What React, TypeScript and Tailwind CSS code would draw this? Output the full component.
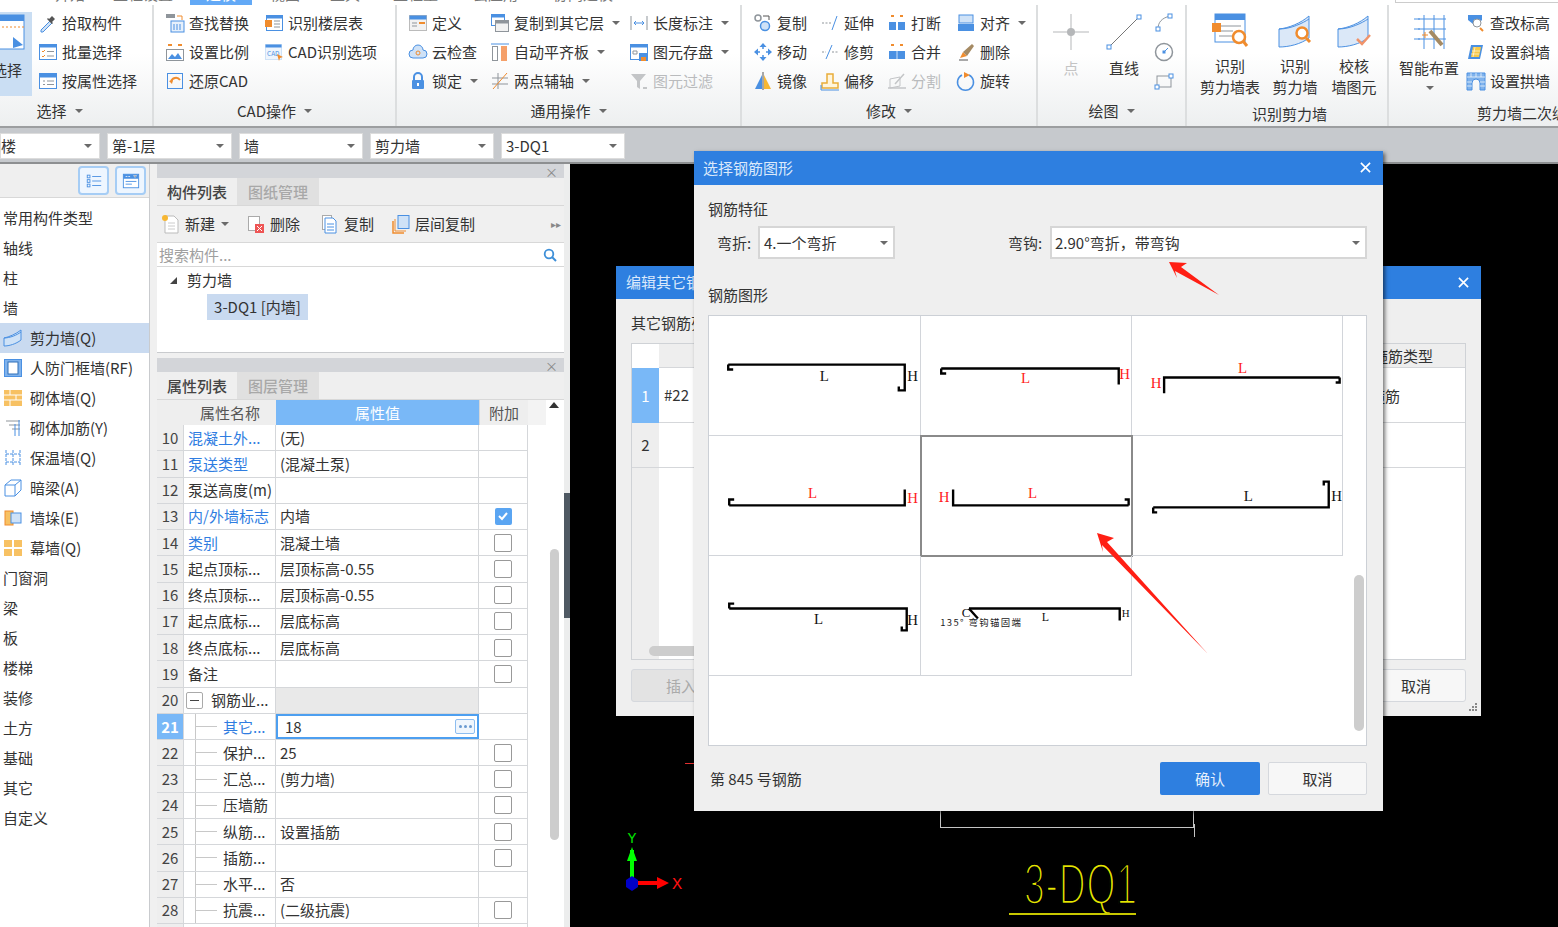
import type { ReactNode } from 'react'

const B = '#4a90e2'
const O = '#f08c2e'
const G = '#8f959b'
const P = '#cfe2f7'

const icons: Record<string, ReactNode> = {
  pick: <><path d="M3 17l9-9 2 2-9 9H3z" fill={P} stroke={B} /><path d="M11 6l3-3 3 3-3 3 1 1-1 1-5-5 1-1z" fill="#555" /></>,
  batch: <><rect x="1.5" y="2.5" width="17" height="15" fill="#fff" stroke={B} /><rect x="1.5" y="2.5" width="17" height="3" fill={B} /><path d="M4 9l1 1 2-2M4 14l1 1 2-2" stroke={O} fill="none" /><path d="M9 9.5h7M9 14h7" stroke={G} /></>,
  attr: <><rect x="1.5" y="2.5" width="17" height="15" fill="#fff" stroke={B} /><rect x="1.5" y="2.5" width="17" height="4" fill={B} /><path d="M5 10h2M9 10h7M5 13.5h2M9 13.5h7" stroke={G} /></>,
  listv: <><rect x="2.5" y="3.5" width="3" height="3" fill="none" stroke={B} /><rect x="2.5" y="8.5" width="3" height="3" fill="none" stroke={B} /><rect x="2.5" y="13.5" width="3" height="3" fill="none" stroke={B} /><path d="M8 5h10M8 10h10M8 15h10" stroke={B} /></>,
  formv: <><rect x="1.5" y="2.5" width="17" height="15" fill="#fff" stroke={B} /><rect x="1.5" y="2.5" width="17" height="5" fill={B} /><path d="M4 5h2M7 5h2M13 4h3l-1.5 2z" stroke="#fff" strokeWidth=".8" /><path d="M4 10.5h12M4 13.5h7" stroke={B} /></>,
  find: <><rect x="1" y="1" width="9" height="4" fill={G} /><path d="M12 3h5v4" stroke={O} fill="none" /><rect x="6" y="8" width="13" height="11" fill="#e6f0fb" stroke={B} /><path d="M9 11v6M12 11v6M15 11v6" stroke={B} /></>,
  scale: <><path d="M3 3h4M13 3h4" stroke={O} strokeWidth="2" /><rect x="1.5" y="7.5" width="17" height="11" fill="#fff" stroke={G} /><path d="M3 17l4-5 3 3 3-4 4 6z" fill={B} /></>,
  restore: <><rect x="2.5" y="2.5" width="15" height="15" fill="none" stroke={B} /><path d="M6 11a5 5 0 0 1 9-2" stroke={O} strokeWidth="2" fill="none" /><path d="M4 10l3 3 1-4z" fill={O} /></>,
  floor: <><rect x="2.5" y="2.5" width="16" height="15" fill="#fff" stroke={B} /><rect x="2.5" y="2.5" width="16" height="3" fill={B} /><rect x="1" y="7" width="7" height="7" fill={O} /><path d="M10 8h6M10 11h6M10 14h6" stroke={G} /></>,
  cadopt: <><rect x="1.5" y="2.5" width="16" height="15" fill="#eef5fd" stroke={P} /><rect x="1.5" y="2.5" width="16" height="3" fill={B} /><text x="3" y="14" fontSize="6.5" fill={B}>CAD</text><path d="M13 12l6 3-3 1-1 3z" fill={O} /></>,
  define: <><rect x="1.5" y="2.5" width="17" height="15" fill="#f2f2f2" stroke="#bbb" /><rect x="1.5" y="2.5" width="17" height="4" fill={B} /><path d="M4 10h5M4 13h5" stroke={G} /><path d="M11 9h6v2h-6z" fill={O} /></>,
  cloud: <><path d="M5 16a4 4 0 0 1 0-8 5 5 0 0 1 10 0 4 4 0 0 1 0 8z" fill={P} stroke={B} /><circle cx="10" cy="11" r="2" fill="none" stroke={O} /></>,
  lock: <><path d="M6 9V6a4 4 0 0 1 8 0v3" fill="none" stroke={B} strokeWidth="2" /><rect x="4" y="9" width="12" height="9" rx="1" fill={B} /><rect x="9" y="12" width="2" height="3" fill="#fff" /></>,
  copylayer: <><rect x="1.5" y="1.5" width="13" height="11" fill="#fff" stroke={B} /><rect x="1.5" y="1.5" width="13" height="3" fill={B} /><rect x="5.5" y="7.5" width="13" height="11" fill="#f2f2f2" stroke={G} /><rect x="5.5" y="7.5" width="13" height="3" fill={G} /></>,
  alignboard: <><rect x="2.5" y="4.5" width="5" height="14" fill="#fff" stroke={G} /><rect x="11" y="4" width="6" height="15" fill="#f5a06a" /><path d="M1 2h18" stroke={B} /></>,
  axis: <><path d="M2 7h16M2 13h16M8 2v16" stroke={G} /><path d="M3 18L17 2" stroke={O} /></>,
  measure: <><path d="M2 3v14M18 3v14" stroke={G} /><path d="M5 10h10M5 10l2-2M5 10l2 2M15 10l-2-2M15 10l-2 2" stroke={B} fill="none" /></>,
  save: <><rect x="1.5" y="2.5" width="17" height="15" fill="#fff" stroke={B} /><rect x="1.5" y="2.5" width="17" height="3" fill={B} /><path d="M4 9h4v3H4z" fill="none" stroke={G} /><rect x="10" y="11" width="9" height="8" fill={B} /><rect x="12" y="15" width="5" height="4" fill={O} /></>,
  filter: <path d="M2 3h15l-6 7v8l-3-2v-6zM14 16h4v2h-4z" fill="#c3c5c7" />,
  copy: <><circle cx="5" cy="5" r="3" fill="none" stroke={G} strokeWidth="1.5" /><circle cx="12" cy="13" r="4.5" fill={P} stroke={B} strokeWidth="1.5" /><path d="M10 3h6v4" fill="none" stroke="#555" /></>,
  extend: <><path d="M2 10h9" stroke={G} strokeDasharray="2 1.5" /><path d="M12 17l5-14" stroke={B} /></>,
  break: <><path d="M4 3h3M13 3h3" stroke={O} strokeWidth="2" /><rect x="2" y="9" width="7" height="8" fill={B} /><rect x="11" y="9" width="7" height="8" fill={B} /></>,
  alignr: <><rect x="3" y="2" width="14" height="8" fill={P} stroke={B} /><rect x="2" y="11" width="16" height="7" fill={B} /></>,
  move: <><path d="M10 1l3.5 4h-7zM10 19l3.5-4h-7zM1 10l4-3.5v7zM19 10l-4-3.5v7z" fill={B} /><path d="M10 5v2M10 13v2M5 10h2M13 10h2" stroke={B} strokeWidth="1.5" /></>,
  trim: <><path d="M2 10h4M12 10h6" stroke={G} strokeDasharray="2 1.5" /><path d="M6 17l6-14" stroke={B} /></>,
  merge: <><path d="M4 3h3M13 3h3" stroke={O} strokeWidth="2" /><rect x="2" y="9" width="16" height="8" fill={B} /><path d="M10 9v8" stroke={P} /></>,
  del: <><path d="M3 18h9" stroke="#555" /><path d="M4 16l3-6 4 4z" fill={O} /><path d="M7 10l9-8 2 2-7 10z" fill="#a58a63" /></>,
  mirror: <><path d="M9 4v14H2z" fill={B} /><path d="M11 4v14h7z" fill="#f7b733" /><path d="M10 1v18" stroke="#555" /></>,
  offset: <><path d="M2 17v-5h5V3h6v9h5v5z" fill="#fff5dc" stroke="#e9ad3a" strokeWidth="1.5" /><path d="M1 14v5h18" fill="none" stroke={B} /></>,
  split: <><path d="M3 17V8l10-2v9z" fill="none" stroke="#c3c5c7" /><path d="M1 17h18M8 13l9-10" stroke="#c3c5c7" strokeWidth="1.5" /></>,
  rotate: <><path d="M6 4a8 8 0 1 0 7 0" fill="none" stroke={B} strokeWidth="1.5" /><path d="M8 1l6 3-6 3z" fill={O} /></>,
  arc: <><path d="M4 16C4 9 8 5 16 3" fill="none" stroke={G} /><rect x="2" y="14" width="4" height="4" fill="#fff" stroke={B} /><rect x="14" y="1" width="4" height="4" fill="#fff" stroke={B} /></>,
  circle: <><circle cx="10" cy="10" r="8.5" fill="none" stroke={G} strokeWidth="1.5" /><rect x="8.5" y="8.5" width="3" height="3" fill={B} /><path d="M10 10l4-4" stroke={B} /></>,
  rectd: <><rect x="3" y="5" width="14" height="11" fill="none" stroke={G} /><rect x="1" y="14" width="4" height="4" fill="#fff" stroke={B} /><rect x="15" y="3" width="4" height="4" fill="#fff" stroke={B} /></>,
  elev: <><path d="M2 2h14v5l-4 4H7L2 7z" fill={B} /><circle cx="11" cy="10" r="4" fill="#fff" stroke={G} /><path d="M14 15l3 3" stroke={O} strokeWidth="2" /></>,
  slant: <><path d="M5 3h12l-3 14H2z" fill={B} /><path d="M7 5h8l-2 10H5z" fill="#f7c948" /><path d="M6 9h8M5 12h8M9 5l-2 10" stroke="#fff" strokeWidth=".6" /></>,
  arch: <><path d="M1 2h18v17h-5v-7a4 4 0 0 0-8 0v7H1z" fill="#7fb2ec" stroke={B} /><path d="M1 6h18M5 2v4M10 2v4M15 2v4M1 11h5M14 11h5M1 15h5M14 15h5" stroke="#fff" strokeWidth=".7" /></>,
  newdoc: <><path d="M4 2h9l4 4v13H4z" fill="#fff" stroke="#bbb" /><path d="M7 9h7M7 12h7M7 15h7" stroke="#ccc" /><circle cx="4" cy="4" r="3" fill="#f7b733" /></>,
  deldoc: <><rect x="2.5" y="2.5" width="11" height="14" fill="#fff" stroke="#aaa" /><rect x="9" y="10" width="9" height="9" fill="#e55" /><path d="M11 12l5 5M16 12l-5 5" stroke="#fff" /></>,
  copydoc: <><rect x="2.5" y="1.5" width="9" height="14" fill="#fff" stroke="#aaa" /><path d="M5 4h8l3 3v12H5z" fill="#fff" stroke={B} /><path d="M7 10h7M7 13h7M7 16h7" stroke={B} /></>,
  floorcopy: <><path d="M2 7v12h11" fill="none" stroke={O} strokeWidth="1.5" /><path d="M4 5v12h11" fill="none" stroke={O} /><rect x="7" y="1.5" width="11" height="13" fill={P} stroke={B} /></>,
  shear: <><path d="M1 10C6 9 13 6 18 2v10c-5 4-12 6-17 6z" fill={P} stroke={B} /><path d="M1 10c6 0 13-3 17-6" fill="none" stroke={B} /></>,
  door: <><rect x="1.5" y="1.5" width="17" height="17" fill="#7fb2ec" stroke={B} /><rect x="5" y="4" width="10" height="12" fill="#fff" stroke="#2f6fb7" /></>,
  brick: <><rect x="1" y="2" width="18" height="16" fill="#f7c163" /><path d="M1 7h18M1 12h18M7 2v5M13 7v5M7 12v6" stroke="#fff" /></>,
  rebarw: <><path d="M3 3h14M6 7h11M9 11h8" stroke={G} /><path d="M16 2v16M12 6v12" stroke={B} /></>,
  insulate: <><path d="M3 2v16M10 2v16M17 2v16M3 6h14M3 14h14" stroke={B} strokeDasharray="3 1" /></>,
  hiddenbeam: <><path d="M2 7l6-5h10v10l-6 6H2z" fill="#fff" stroke={B} /><path d="M2 7h10v11M12 7l6-5" fill="none" stroke={B} /></>,
  pier: <><rect x="2" y="3" width="8" height="14" fill="#f7c163" stroke={O} /><rect x="8" y="5" width="10" height="10" fill={P} stroke={B} /></>,
  curtain: <><rect x="1" y="2" width="18" height="16" fill="#f7c163" /><path d="M10 2v16M1 10h18" stroke="#fff" strokeWidth="2" /></>,
}

function Ico({ name, size = 20 }: { name: string; size?: number }) {
  return (
    <svg viewBox="0 0 20 20" width={size} height={size} className="shrink-0">
      {icons[name]}
    </svg>
  )
}

function Caret({ color = 'border-t-[#6a6a6a]' }: { color?: string }) {
  return <span className={`inline-block w-0 h-0 border-x-[4px] border-x-transparent border-t-[4px] ${color}`} />
}

function Tool({ icon, label, caret, off, w }: { icon: string; label: string; caret?: boolean; off?: boolean; w: string }) {
  return (
    <div className={`flex items-center h-[29px] shrink-0 ${w}`}>
      <Ico name={icon} />
      <span className={`ml-[4px] whitespace-nowrap ${off ? 'text-[#b9bbbd]' : ''}`}>{label}</span>
      {caret && <span className="ml-[8px] flex"><Caret /></span>}
    </div>
  )
}

function Group({ w, label, caret, labelPad, children, pl }: { w: string; label: string; caret?: boolean; labelPad: string; children: ReactNode; pl: string }) {
  return (
    <div className={`relative flex flex-col shrink-0 border-r-2 border-r-[#dcdedf] ${w}`}>
      <div className={`flex h-[90px] pt-[3px] ${pl}`}>{children}</div>
      <div className={`flex items-center justify-center gap-[8px] ${labelPad}`}>
        <span>{label}</span>
        {caret && <Caret />}
      </div>
    </div>
  )
}

function Col({ children }: { children: ReactNode }) {
  return <div className="flex flex-col">{children}</div>
}

function BigBtn({ w, icon, lines, off }: { w: string; icon: ReactNode; lines: string[]; off?: boolean }) {
  return (
    <div className={`flex flex-col items-center shrink-0 ${w}`}>
      <div className="h-[38px] mt-[5px] flex items-center">{icon}</div>
      <div className={`mt-[6px] leading-[21px] text-center whitespace-nowrap ${off ? 'text-[#c4c4c4]' : ''}`}>
        {lines.map(l => <div key={l}>{l}</div>)}
      </div>
    </div>
  )
}

function WallArt({ kind }: { kind: 'find' | 'check' }) {
  return (
    <svg viewBox="0 0 36 36" width="36" height="36">
      <path d="M2 16c10-1 22-6 30-13v22c-8 6-20 9-30 9z" fill="#dbe8f8" stroke={B} />
      <path d="M2 16c12 0 24-6 30-10" fill="none" stroke={B} />
      {kind === 'find' ? (
        <><circle cx="25" cy="20" r="5.5" fill="#fff" stroke={O} strokeWidth="2.5" /><path d="M29 25l4 4" stroke={O} strokeWidth="3" /></>
      ) : (
        <path d="M21 26l5 5 8-9" fill="none" stroke="#f0936a" strokeWidth="2.5" />
      )}
    </svg>
  )
}

function Ribbon() {
  return (
    <div className="flex h-[123px] bg-gradient-to-b from-white from-40% to-[#edeff0] border-b-2 border-b-[#9c9ea0] text-[15px] leading-[22px] text-[#333]">
      <Group w="w-[154px]" label="选择" caret labelPad="pt-[5px] pr-[33px]" pl="">
        <div className="w-[32px] h-[84px] mt-[4px] bg-[#cadef3] overflow-hidden shrink-0 flex flex-col">
          <svg viewBox="0 0 32 38" width="32" height="38" className="mt-[1px]">
            <rect x="-10" y="2" width="34" height="34" fill="#fff" stroke={B} />
            <rect x="-10" y="2" width="34" height="6" fill={B} />
            <path d="M-10 14h34" stroke={O} strokeDasharray="2 2" />
            <path d="M13 24l10 8-10 3z" fill={B} />
          </svg>
          <span className="-ml-[8px] mt-[8px] whitespace-nowrap">选择</span>
        </div>
        <div className="ml-[6px]">
          <Col>
            <Tool w="" icon="pick" label="拾取构件" />
            <Tool w="" icon="batch" label="批量选择" />
            <Tool w="" icon="attr" label="按属性选择" />
          </Col>
        </div>
      </Group>
      <Group w="w-[243px]" label="CAD操作" caret labelPad="pt-[5px]" pl="pl-[11px]">
        <Col>
          <Tool w="w-[99px]" icon="find" label="查找替换" />
          <Tool w="w-[99px]" icon="scale" label="设置比例" />
          <Tool w="w-[99px]" icon="restore" label="还原CAD" />
        </Col>
        <Col>
          <Tool w="" icon="floor" label="识别楼层表" />
          <Tool w="" icon="cadopt" label="CAD识别选项" />
        </Col>
      </Group>
      <Group w="w-[345px]" label="通用操作" caret labelPad="pt-[5px]" pl="pl-[11px]">
        <Col>
          <Tool w="w-[82px]" icon="define" label="定义" />
          <Tool w="w-[82px]" icon="cloud" label="云检查" />
          <Tool w="w-[82px]" icon="lock" label="锁定" caret />
        </Col>
        <Col>
          <Tool w="w-[139px]" icon="copylayer" label="复制到其它层" caret />
          <Tool w="w-[139px]" icon="alignboard" label="自动平齐板" caret />
          <Tool w="w-[139px]" icon="axis" label="两点辅轴" caret />
        </Col>
        <Col>
          <Tool w="" icon="measure" label="长度标注" caret />
          <Tool w="" icon="save" label="图元存盘" caret />
          <Tool w="" icon="filter" label="图元过滤" off />
        </Col>
      </Group>
      <Group w="w-[296px]" label="修改" caret labelPad="pt-[5px]" pl="pl-[11px]">
        <Col>
          <Tool w="w-[67px]" icon="copy" label="复制" />
          <Tool w="w-[67px]" icon="move" label="移动" />
          <Tool w="w-[67px]" icon="mirror" label="镜像" />
        </Col>
        <Col>
          <Tool w="w-[67px]" icon="extend" label="延伸" />
          <Tool w="w-[67px]" icon="trim" label="修剪" />
          <Tool w="w-[67px]" icon="offset" label="偏移" />
        </Col>
        <Col>
          <Tool w="w-[69px]" icon="break" label="打断" />
          <Tool w="w-[69px]" icon="merge" label="合并" />
          <Tool w="w-[69px]" icon="split" label="分割" off />
        </Col>
        <Col>
          <Tool w="" icon="alignr" label="对齐" caret />
          <Tool w="" icon="del" label="删除" />
          <Tool w="" icon="rotate" label="旋转" />
        </Col>
      </Group>
      <Group w="w-[149px]" label="绘图" caret labelPad="pt-[5px]" pl="pl-[13px]">
        <BigBtn w="w-[40px]" off lines={['点']} icon={
          <svg viewBox="0 0 36 36" width="36" height="36"><path d="M0 18h36M18 0v36" stroke="#b5b7b9" /><circle cx="18" cy="18" r="4" fill="#b5b7b9" /></svg>
        } />
        <div className="ml-[13px]">
          <BigBtn w="w-[40px]" lines={['直线']} icon={
            <svg viewBox="0 0 36 36" width="36" height="36"><path d="M3 33L33 3" stroke="#777" /><rect x="1" y="31" width="4" height="4" fill="#fff" stroke={B} /><rect x="31" y="1" width="4" height="4" fill="#fff" stroke={B} /></svg>
          } />
        </div>
        <div className="ml-[10px] flex flex-col">
          {['arc', 'circle', 'rectd'].map(n => (
            <div key={n} className="h-[29px] flex items-center"><Ico name={n} /></div>
          ))}
        </div>
      </Group>
      <Group w="w-[202px]" label="识别剪力墙" labelPad="pt-[8px] pl-[5px]" pl="pl-[11px]">
        <BigBtn w="w-[64px]" lines={['识别', '剪力墙表']} icon={
          <svg viewBox="0 0 38 36" width="38" height="36">
            <rect x="4" y="1" width="30" height="28" fill="#fff" stroke={B} /><rect x="4" y="1" width="30" height="6" fill={B} />
            <path d="M8 13h22M8 18h14M8 23h14" stroke={G} /><rect x="1" y="10" width="9" height="9" fill={O} />
            <circle cx="28" cy="24" r="6" fill="#fff" stroke={O} strokeWidth="2.5" /><path d="M32 28l4 5" stroke={O} strokeWidth="3" />
          </svg>
        } />
        <BigBtn w="w-[66px]" lines={['识别', '剪力墙']} icon={<WallArt kind="find" />} />
        <BigBtn w="w-[52px]" lines={['校核', '墙图元']} icon={<WallArt kind="check" />} />
      </Group>
      <div className="relative flex flex-col flex-1 min-w-0">
        <div className="flex h-[90px] pt-[3px] pl-[10px]">
          <BigBtn w="w-[60px]" lines={['智能布置']} icon={
            <svg viewBox="0 0 38 38" width="38" height="38">
              <path d="M8 6h28M8 16h28M8 26h28M14 2v34M24 2v34M34 2v34" stroke={B} />
              <path d="M4 6h6M4 16h6M4 26h6" stroke={B} />
              <path d="M20 18l12 14" stroke="#a58a63" strokeWidth="4" /><path d="M12 22h6M15 19v6" stroke={O} />
            </svg>
          } />
          <div className="ml-[7px]">
            <Col>
              <Tool w="" icon="elev" label="查改标高" />
              <Tool w="" icon="slant" label="设置斜墙" />
              <Tool w="" icon="arch" label="设置拱墙" />
            </Col>
          </div>
        </div>
        <div className="pl-[88px] pt-[7px] whitespace-nowrap">剪力墙二次编辑</div>
        <div className="absolute left-[37px] top-[81px] flex"><Caret /></div>
      </div>
    </div>
  )
}

function TopStrip() {
  const tabs = [
    { t: '开始', c: 'ml-[55px] w-[58px]' },
    { t: '工程设置', c: 'w-[77px]' },
    { t: '建模', c: 'w-[62px] bg-[#63a9f6] text-white text-center' },
    { t: '视图', c: 'ml-[18px] w-[60px]' },
    { t: '工具', c: 'w-[63px]' },
    { t: '工程量', c: 'w-[80px]' },
    { t: '云应用', c: 'w-[80px]' },
    { t: '协同建模', c: '' },
  ]
  return (
    <div className="relative flex h-[5px] overflow-hidden bg-white text-[15px] leading-[22px] text-[#777]">
      {tabs.map(x => (
        <div key={x.t} className={`h-[5px] overflow-hidden shrink-0 ${x.c}`}>
          <div className="-mt-[17px]">{x.t}</div>
        </div>
      ))}
      <div className="absolute left-[1395px] top-0 w-[163px] h-[3px] bg-white border-b border-b-[#ccc] border-l border-l-[#ccc]" />
    </div>
  )
}

function Combo({ w, text, noLeft }: { w: string; text: string; noLeft?: boolean }) {
  return (
    <div className={`flex items-center justify-between h-[26px] bg-white border border-[#dcdcdc] shrink-0 pr-[7px] ${noLeft ? 'pl-0' : 'pl-[4px]'} ${w}`}>
      <span className="whitespace-nowrap">{text}</span>
      <Caret />
    </div>
  )
}

function ComboBar() {
  return (
    <div className="flex items-center gap-[7px] h-[36px] pt-[2px] bg-[#c6c9cd] border-b-2 border-b-[#8d8f91] text-[15px] leading-[22px] text-[#333]">
      <Combo w="w-[100px]" text="楼" noLeft />
      <Combo w="w-[125px]" text="第-1层" />
      <Combo w="w-[124px]" text="墙" />
      <Combo w="w-[124px]" text="剪力墙" />
      <Combo w="w-[124px]" text="3-DQ1" />
    </div>
  )
}

const sideItems: { t: string; icon?: string; active?: boolean }[] = [
  { t: '常用构件类型' }, { t: '轴线' }, { t: '柱' }, { t: '墙' },
  { t: '剪力墙(Q)', icon: 'shear', active: true },
  { t: '人防门框墙(RF)', icon: 'door' },
  { t: '砌体墙(Q)', icon: 'brick' },
  { t: '砌体加筋(Y)', icon: 'rebarw' },
  { t: '保温墙(Q)', icon: 'insulate' },
  { t: '暗梁(A)', icon: 'hiddenbeam' },
  { t: '墙垛(E)', icon: 'pier' },
  { t: '幕墙(Q)', icon: 'curtain' },
  { t: '门窗洞' }, { t: '梁' }, { t: '板' }, { t: '楼梯' }, { t: '装修' }, { t: '土方' }, { t: '基础' }, { t: '其它' }, { t: '自定义' },
]

function Sidebar() {
  return (
    <div className="w-[150px] shrink-0 bg-white border-r border-r-[#c9cbce] text-[15px] leading-[22px] text-[#333]">
      <div className="flex justify-end items-center gap-[6px] h-[34px] bg-[#efefef] border-b border-b-[#d8d8d8] pr-[3px]">
        <div className="w-[31px] h-[29px] rounded-[4px] border-2 border-[#a6cdf5] bg-[#eef6ff] flex items-center justify-center"><Ico name="listv" size={18} /></div>
        <div className="w-[31px] h-[29px] rounded-[4px] border-2 border-[#a6cdf5] bg-[#eef6ff] flex items-center justify-center"><Ico name="formv" size={18} /></div>
      </div>
      <div className="pt-[5px]">
        {sideItems.map(i => (
          <div key={i.t} className={`flex items-center h-[30px] pl-[3px] ${i.active ? 'bg-[#c9daf0]' : ''}`}>
            {i.icon && <span className="mr-[7px]"><Ico name={i.icon} /></span>}
            <span className="whitespace-nowrap">{i.t}</span>
          </div>
        ))}
      </div>
    </div>
  )
}

function PanelHead({ a, b }: { a: string; b: string }) {
  return (
    <>
      <div className="flex items-center justify-end h-[14px] shrink-0 bg-[#d3d5d9] pr-[6px] text-[#888] text-[13px] leading-none">×</div>
      <div className="flex h-[28px] shrink-0 bg-[#efefef] border-b border-b-[#d8d8d8] font-medium">
        <div className="flex items-center justify-center w-[80px] text-[#444]">{a}</div>
        <div className="flex items-center justify-center w-[82px] bg-[#e0e0e0] text-[#a8a8a8]">{b}</div>
      </div>
    </>
  )
}

function PanelBtn({ icon, label, caret, w }: { icon: string; label: string; caret?: boolean; w: string }) {
  return (
    <div className={`flex items-center ${w}`}>
      <Ico name={icon} />
      <span className="ml-[4px] whitespace-nowrap">{label}</span>
      {caret && <span className="ml-[6px] flex"><Caret /></span>}
    </div>
  )
}

function ListPanel() {
  return (
    <div className="h-[189px] shrink-0 flex flex-col border-b border-b-[#c9cbce] bg-white">
      <PanelHead a="构件列表" b="图纸管理" />
      <div className="flex items-center h-[37px] shrink-0 bg-[#f0f0f0] border-b border-b-[#d8d8d8] pl-[4px]">
        <PanelBtn w="w-[85px]" icon="newdoc" label="新建" caret />
        <PanelBtn w="w-[74px]" icon="deldoc" label="删除" />
        <PanelBtn w="w-[71px]" icon="copydoc" label="复制" />
        <PanelBtn w="w-[160px]" icon="floorcopy" label="层间复制" />
        <span className="text-[10px] text-[#888]">▸▸</span>
      </div>
      <div className="flex items-center justify-between h-[24px] shrink-0 border-b border-b-[#d8d8d8] pl-[2px] pr-[7px] text-[#a0a0a0]">
        <span>搜索构件...</span>
        <svg viewBox="0 0 14 14" width="14" height="14"><circle cx="6" cy="6" r="4.3" fill="none" stroke="#3d8fd8" strokeWidth="1.8" /><path d="M9 9l4 4" stroke="#3d8fd8" strokeWidth="2" /></svg>
      </div>
      <div className="pl-[13px] pt-[1px]">
        <div className="flex items-center h-[24px]">
          <span className="w-0 h-0 border-l-[7px] border-l-transparent border-b-[7px] border-b-[#444]" />
          <span className="ml-[10px]">剪力墙</span>
        </div>
        <div className="ml-[37px] mt-[2px] w-[101px] h-[26px] flex items-center justify-center bg-[#c9daf0] whitespace-nowrap">3-DQ1 [内墙]</div>
      </div>
    </div>
  )
}

type Row = { n: number; name: string; link?: boolean; val?: string; chk?: boolean; tree?: boolean }

const rows: Row[] = [
  { n: 10, name: '混凝土外...', link: true, val: '(无)' },
  { n: 11, name: '泵送类型', link: true, val: '(混凝土泵)' },
  { n: 12, name: '泵送高度(m)' },
  { n: 13, name: '内/外墙标志', link: true, val: '内墙', chk: true },
  { n: 14, name: '类别', link: true, val: '混凝土墙', chk: false },
  { n: 15, name: '起点顶标...', val: '层顶标高-0.55', chk: false },
  { n: 16, name: '终点顶标...', val: '层顶标高-0.55', chk: false },
  { n: 17, name: '起点底标...', val: '层底标高', chk: false },
  { n: 18, name: '终点底标...', val: '层底标高', chk: false },
  { n: 19, name: '备注', chk: false },
  { n: 20, name: '钢筋业...' },
  { n: 21, name: '其它...', link: true, tree: true, val: '18' },
  { n: 22, name: '保护...', tree: true, val: '25', chk: false },
  { n: 23, name: '汇总...', tree: true, val: '(剪力墙)', chk: false },
  { n: 24, name: '压墙筋', tree: true, chk: false },
  { n: 25, name: '纵筋...', tree: true, val: '设置插筋', chk: false },
  { n: 26, name: '插筋...', tree: true, chk: false },
  { n: 27, name: '水平...', tree: true, val: '否' },
  { n: 28, name: '抗震...', tree: true, val: '(二级抗震)', chk: false },
]

function PropRow({ r }: { r: Row }) {
  const sel = r.n === 21
  const group = r.n === 20
  return (
    <div className="flex h-[26.27px] w-[371px] border-b border-b-[#d5d7da] shrink-0">
      <div className={`flex items-center justify-center w-[27px] border-r border-r-[#d5d7da] ${sel ? 'bg-[#79b8f7] text-white font-bold' : 'bg-[#eeeeee] text-[#444]'}`}>{r.n}</div>
      <div className={`flex items-center w-[92px] border-r border-r-[#d5d7da] whitespace-nowrap overflow-hidden ${r.tree ? 'pl-[11px]' : group ? 'pl-[2px]' : 'pl-[4px]'} ${r.link ? 'text-[#2f7de1]' : ''}`}>
        {r.tree && (
          <>
            <span className="w-[1px] h-full bg-[#c8c8c8] shrink-0" />
            <span className="w-[21px] h-[1px] bg-[#c8c8c8] shrink-0" />
            <span className="w-[6px] shrink-0" />
          </>
        )}
        {group && (
          <span className="flex items-center justify-center w-[17px] h-[17px] mr-[8px] border border-[#aaa] rounded-[2px] shrink-0">
            <span className="w-[9px] h-[1px] bg-[#444]" />
          </span>
        )}
        {r.name}
      </div>
      {sel ? (
        <div className="flex items-center justify-between w-[203px] border-2 border-[#4d9ff0] pl-[7px] pr-[2px] bg-white">
          <span>18</span>
          <span className="flex items-center justify-center gap-[2px] w-[20px] h-[15px] border border-[#8dbdf0] rounded-[2px] bg-[#f0f6fd]">
            <span className="w-[3px] h-[3px] rounded-full bg-[#6a9ad0]" />
            <span className="w-[3px] h-[3px] rounded-full bg-[#6a9ad0]" />
            <span className="w-[3px] h-[3px] rounded-full bg-[#6a9ad0]" />
          </span>
        </div>
      ) : (
        <div className={`flex items-center w-[203px] border-r border-r-[#d5d7da] pl-[4px] whitespace-nowrap ${group ? 'bg-[#e9e9e9]' : ''}`}>{r.val}</div>
      )}
      <div className="flex items-center justify-center w-[49px] border-r border-r-[#d5d7da]">
        {r.chk === true && (
          <span className="flex items-center justify-center w-[17px] h-[17px] rounded-[2px] bg-[#5aa5f2]">
            <svg viewBox="0 0 12 12" width="12" height="12"><path d="M2 6l3 3 5-6" fill="none" stroke="#fff" strokeWidth="2" /></svg>
          </span>
        )}
        {r.chk === false && <span className="w-[18px] h-[18px] rounded-[2px] border border-[#999] bg-white" />}
      </div>
    </div>
  )
}

function PropPanel() {
  return (
    <div className="relative mt-[5px] flex-1 min-h-0 flex flex-col bg-white overflow-hidden">
      <PanelHead a="属性列表" b="图层管理" />
      <div className="flex h-[25px] shrink-0 text-[#555]">
        <div className="w-[27px] bg-[#eeeeee]" />
        <div className="flex items-center justify-center w-[92px] bg-[#eeeeee]">属性名称</div>
        <div className="flex items-center justify-center w-[203px] bg-[#79b8f7] text-white">属性值</div>
        <div className="flex items-center justify-center w-[49px] bg-[#eeeeee] border-l border-l-[#d5d7da]">附加</div>
        <div className="w-[18px] bg-[#f3f3f3]" />
      </div>
      {rows.map(r => <PropRow key={r.n} r={r} />)}
      <div className="flex w-[371px] h-[8px] shrink-0">
        <div className="w-[27px] bg-[#eeeeee] border-r border-r-[#d5d7da]" />
        <div className="w-[92px] border-r border-r-[#d5d7da]" />
        <div className="w-[203px] border-r border-r-[#d5d7da]" />
        <div className="w-[49px] border-r border-r-[#d5d7da]" />
      </div>
      <div className="absolute left-[393px] top-[191px] w-[9px] h-[291px] rounded-full bg-[#cdcdcd]" />
      <span className="absolute left-[392px] top-[44px] w-0 h-0 border-x-[5px] border-x-transparent border-b-[6px] border-b-[#333]" />
    </div>
  )
}

function Rebar({ line, hook, labels, extra, selected }: {
  line: string
  hook: string
  labels: { t: string; x: number; y: number; red?: boolean; size?: number }[]
  extra?: ReactNode
  selected?: boolean
}) {
  return (
    <div className={`h-[120px] border-r border-b border-[#d2d5da] ${selected ? 'outline-2 -outline-offset-1 outline-[#8a8a8a]' : ''}`}>
      <svg viewBox="0 0 211 120" width="210" height="119" className="block">
        <path d={line} fill="none" stroke="#000" strokeWidth="2.4" />
        <path d={hook} fill="none" stroke="#000" strokeWidth="2.4" />
        {labels.map(l => (
          <text key={l.t + l.x} x={l.x} y={l.y} textAnchor="middle" fontFamily="'Liberation Serif', serif" fontSize={l.size ?? 15} fill={l.red ? '#ff2020' : '#111'}>{l.t}</text>
        ))}
        {extra}
      </svg>
    </div>
  )
}

function RebarDialog() {
  return (
    <div className="absolute left-[694px] top-[151px] w-[689px] h-[660px] flex flex-col bg-[#efefef] shadow-[2px_2px_4px_rgba(0,0,0,0.55)] text-[15px] leading-[22px] text-[#333]">
      <div className="flex items-center justify-between h-[34px] shrink-0 bg-[#2e7fe0] pl-[9px] pr-[12px] pb-[1px] text-[#dbe9fb]">
        <span>选择钢筋图形</span>
        <svg viewBox="0 0 12 12" width="11" height="11"><path d="M1 1l10 10M11 1L1 11" stroke="#fff" strokeWidth="1.8" /></svg>
      </div>
      <div className="pl-[14px] mt-[13px]">钢筋特征</div>
      <div className="flex items-center mt-[6px] pl-[23px] h-[33px]">
        <span className="w-[41px]">弯折:</span>
        <div className="flex items-center justify-between w-[137px] h-[33px] bg-white border-2 border-[#d6d6d6] pl-[4px] pr-[5px]">
          <span>4.一个弯折</span><Caret />
        </div>
        <span className="ml-[113px] w-[42px]">弯钩:</span>
        <div className="flex items-center justify-between w-[317px] h-[33px] bg-white border-2 border-[#d6d6d6] pl-[3px] pr-[5px]">
          <span>2.90°弯折，带弯钩</span><Caret />
        </div>
      </div>
      <div className="pl-[14px] mt-[25px]">钢筋图形</div>
      <div className="relative mx-[14px] mt-[9px] w-[659px] h-[431px] bg-white border border-[#ccd0d6] overflow-hidden">
        <div className="grid grid-cols-[212px_211px_211px] grid-rows-[120px_120px_120px] w-[634px]">
          <Rebar line="M19 49H197V75H191V71" hook="M19 49v5h5" labels={[{ t: 'L', x: 116, y: 66 }, { t: 'H', x: 205, y: 66 }]} />
          <Rebar line="M20 53H199V69" hook="M20 53v5h5" labels={[{ t: 'L', x: 105, y: 68, red: true }, { t: 'H', x: 205, y: 64, red: true }]} />
          <Rebar line="M32 78V62H209" hook="M209 62v5h-4" labels={[{ t: 'L', x: 111, y: 57, red: true }, { t: 'H', x: 24, y: 73, red: true }]} />
          <Rebar line="M20 70H197V54" hook="M20 70v-6h5" labels={[{ t: 'L', x: 104, y: 63, red: true }, { t: 'H', x: 205, y: 68, red: true }]} />
          <Rebar selected line="M32 54V70H209" hook="M209 70v-6h-4" labels={[{ t: 'L', x: 112, y: 63, red: true }, { t: 'H', x: 23, y: 67, red: true }]} />
          <Rebar line="M21 72H198V46H193V50" hook="M21 72v5h4" labels={[{ t: 'L', x: 117, y: 66 }, { t: 'H', x: 206, y: 66 }]} />
          <Rebar line="M20 53H199V75H194V71" hook="M20 53v-5h5" labels={[{ t: 'L', x: 110, y: 69 }, { t: 'H', x: 205, y: 70 }]} />
          <Rebar line="M48 53H200V65" hook="M48 53l9 10" labels={[{ t: 'C', x: 45, y: 62, size: 13 }, { t: 'L', x: 125, y: 66, size: 12 }, { t: 'H', x: 206, y: 62, size: 11 }]} extra={
            <text x="19" y="71" fontSize="9.5" fontFamily="'Noto Sans CJK SC', sans-serif" fill="#222" letterSpacing="1.4">135° 弯钩锚固端</text>
          } />
        </div>
        <div className="absolute left-[645px] top-[259px] w-[10px] h-[156px] rounded-full bg-[#cdcdcd]" />
      </div>
      <div className="flex items-center justify-between h-[33px] mt-[16px] pl-[16px] pr-[16px]">
        <span>第 845 号钢筋</span>
        <div className="flex gap-[8px]">
          <div className="flex items-center justify-center w-[100px] h-[33px] rounded-[2px] bg-[#2e7fe0] text-[#e6f0fc]">确认</div>
          <div className="flex items-center justify-center w-[99px] h-[33px] rounded-[2px] bg-[#f7f7f7] border border-[#d5d8dd]">取消</div>
        </div>
      </div>
    </div>
  )
}

function OtherRebarDialog() {
  return (
    <div className="absolute left-[616px] top-[266px] w-[865px] h-[450px] flex flex-col bg-[#efefef] text-[15px] leading-[22px] text-[#333]">
      <div className="flex items-center justify-between h-[33px] shrink-0 bg-[#2e7fe0] pl-[10px] pr-[12px] pb-[1px] text-[#dbe9fb]">
        <span>编辑其它钢筋</span>
        <svg viewBox="0 0 12 12" width="11" height="11"><path d="M1 1l10 10M11 1L1 11" stroke="#fff" strokeWidth="1.8" /></svg>
      </div>
      <div className="pl-[15px] mt-[13px]">其它钢筋列表</div>
      <div className="relative mx-[15px] mt-[9px] h-[317px] flex bg-white border border-[#cfd2d6] overflow-hidden">
        <div className="w-[27px] flex flex-col shrink-0 bg-[#eeeeee]">
          <div className="h-[24px] bg-white" />
          <div className="flex items-center justify-center h-[55px] bg-[#79b8f7] text-white">1</div>
          <div className="flex items-center justify-center h-[45px] border-b border-b-[#d5d7da]">2</div>
          <div className="flex-1 mb-[18px]" />
        </div>
        <div className="flex-1 flex flex-col">
          <div className="h-[24px] bg-[#eeeeee] border-b border-b-[#d5d7da]" />
          <div className="flex items-center h-[55px] pl-[5px] border-b border-b-[#d5d7da]">#22</div>
          <div className="h-[45px] border-b border-b-[#d5d7da]" />
        </div>
        <div className="absolute right-[32px] top-0 h-[24px] flex items-center whitespace-nowrap">箍筋类型</div>
        <div className="absolute right-[65px] top-[24px] h-[55px] flex items-center whitespace-nowrap">箍筋</div>
        <div className="absolute left-[17px] right-[300px] bottom-[3px] h-[10px] rounded-full bg-[#cdcdcd]" />
      </div>
      <div className="flex justify-between mx-[15px] mt-[9px]">
        <div className="flex items-center w-[200px] h-[33px] pl-[34px] rounded-[3px] bg-[#e3e3e3] border border-[#d5d8dd] text-[#aaa]">插入</div>
        <div className="flex items-center justify-center w-[100px] h-[33px] rounded-[3px] bg-[#f7f7f7] border border-[#d5d8dd]">取消</div>
      </div>
      <svg viewBox="0 0 10 10" width="10" height="10" className="absolute right-[4px] bottom-[4px]">
        <path d="M8 1h2v2H8zM5 4h2v2H5zM8 4h2v2H8zM2 7h2v2H2zM5 7h2v2H5zM8 7h2v2H8z" fill="#888" />
      </svg>
    </div>
  )
}

function CadCanvas() {
  return (
    <div className="relative flex-1 bg-black overflow-hidden">
      <div className="absolute left-[115px] top-[599px] w-[9px] h-[1px] bg-[#e03030]" />
      <div className="absolute left-[370px] top-[647px] w-[254px] h-[17px] border-x border-b border-[#c4c4c4]" />
      <div className="absolute left-[624px] top-[660px] w-[1px] h-[13px] bg-[#c4c4c4]" />
      <svg viewBox="0 0 70 70" width="70" height="70" className="absolute left-[50px] top-[666px]">
        <path d="M12 20V53" stroke="#00ff00" strokeWidth="4" />
        <path d="M12 17l5 14H7z" fill="#00ff00" />
        <path d="M14 53H40" stroke="#ff0000" strokeWidth="4" />
        <path d="M49 53L37 47V59z" fill="#ff0000" />
        <path d="M12 46l6 4v7l-6 4-6-4v-7z" fill="#0000c8" />
        <text x="12" y="13" textAnchor="middle" fontSize="15" fontFamily="'Liberation Mono', monospace" fill="#00e000">Y</text>
        <text x="57" y="59" textAnchor="middle" fontSize="17" fontFamily="'Liberation Mono', monospace" fill="#ff1010">X</text>
      </svg>
      <svg viewBox="0 0 140 70" width="140" height="70" className="absolute left-[436px] top-[690px]">
        <text transform="translate(18 50) scale(0.81 1.25)" fontFamily="'Liberation Sans', sans-serif" fontSize="46" fill="#e6e600" stroke="#000" strokeWidth="2.2" letterSpacing="1">3-DQ1</text>
      </svg>
      <div className="absolute left-[439px] top-[749px] w-[127px] h-[2px] bg-[#c8c800]" />
    </div>
  )
}

export default function App() {
  return (
    <div className="relative w-[1558px] h-[927px] overflow-hidden flex flex-col bg-[#f0f0f0] font-['Noto_Sans_CJK_SC','Noto_Sans',sans-serif]">
      <TopStrip />
      <Ribbon />
      <ComboBar />
      <div className="flex flex-1 min-h-0">
        <Sidebar />
        <div className="w-[6px] shrink-0" />
        <div className="w-[408px] shrink-0 flex flex-col pl-[1px] text-[15px] leading-[22px] text-[#333]">
          <ListPanel />
          <PropPanel />
        </div>
        <div className="relative w-[6px] shrink-0 bg-[#eceded]">
          <div className="absolute left-0 top-[329px] w-[6px] h-[125px] bg-[#4f5963]" />
        </div>
        <CadCanvas />
      </div>
      <OtherRebarDialog />
      <RebarDialog />
      <svg viewBox="0 0 1558 927" width="1558" height="927" className="absolute left-0 top-0 pointer-events-none">
        <path d="M1169 262L1187 263 1181 267 1219 295 1175 271 1177 278z" fill="#ff1f14" />
        <path d="M1097 533L1114 538 1107 542 1208 654 1102 545 1103 552z" fill="#ff1f14" />
      </svg>
    </div>
  )
}
